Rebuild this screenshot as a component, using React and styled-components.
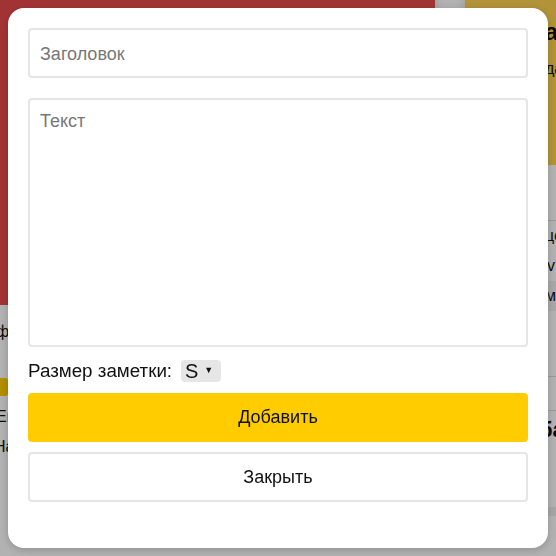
import React, { useState } from 'react';
import styled, { createGlobalStyle } from 'styled-components';

const GlobalStyle = createGlobalStyle`
  * { box-sizing: border-box; }
  html, body {
    margin: 0;
    padding: 0;
    width: 556px;
    height: 556px;
    overflow: hidden;
    font-family: "Liberation Sans", Arial, sans-serif;
    background: #ffffff;
  }
`;

// Page behind the modal
const Board = styled.div`
  display: flex;
  gap: 30px;
  width: 556px;
  height: 556px;
  overflow: hidden;
  margin-top: -40px;
`;

const NoteCard = styled.div`
  flex: 0 0 ${(p) => p.width}px;
  margin-left: ${(p) => p.offset || 0}px;
  display: flex;
  flex-direction: column;
  border-radius: 16px;
  overflow: hidden;
  background: #ffffff;
  box-shadow: 0 4px 10px rgba(0, 0, 0, 0.15);
  height: 630px;
`;

const NoteHead = styled.div`
  background: ${(p) => p.color};
  height: ${(p) => p.height}px;
  padding: 58px 0 0 ${(p) => p.indent || 20}px;
  font-size: 24px;
  font-weight: bold;
  color: #111;
  white-space: nowrap;
`;

const NoteSub = styled.div`
  margin-top: 14px;
  font-size: 16px;
  font-weight: normal;
`;

const NoteRow = styled.div`
  padding: 6px 0 6px ${(p) => p.indent || 0}px;
  font-size: ${(p) => p.size || 16}px;
  color: #111;
  font-weight: ${(p) => (p.bold ? 'bold' : 'normal')};
  background: ${(p) => p.shade || 'transparent'};
  border-bottom: ${(p) => (p.line ? '1px solid #ddd' : 'none')};
  min-height: ${(p) => p.h || 24}px;
  white-space: nowrap;
`;

const Chevron = styled.span`
  display: inline-block;
  width: 22px;
  height: 18px;
  background: #ffcc00;
  border-radius: 3px;
  text-align: center;
  font-size: 12px;
  line-height: 18px;
`;

const Overlay = styled.div`
  position: fixed;
  inset: 0;
  background: rgba(0, 0, 0, 0.3);
  display: flex;
  align-items: flex-start;
  justify-content: center;
  padding-top: 8px;
`;

const Modal = styled.form`
  width: 540px;
  height: 540px;
  background: #ffffff;
  border-radius: 16px;
  box-shadow: 0 2px 8px rgba(0, 0, 0, 0.2);
  padding: 20px 20px 46px 20px;
  display: flex;
  flex-direction: column;
`;

const TitleInput = styled.input`
  width: 100%;
  height: 50px;
  border: 2px solid #e6e6e6;
  border-radius: 4px;
  padding: 4px 10px 0 10px;
  font-family: inherit;
  font-size: 18px;
  color: #222;
  outline: none;
  &::placeholder { color: #777; }
`;

const TextArea = styled.textarea`
  width: 100%;
  height: 250px;
  margin-top: 20px;
  border: 2px solid #e6e6e6;
  border-radius: 4px;
  padding: 11px 10px;
  font-family: inherit;
  font-size: 18px;
  color: #222;
  resize: none;
  outline: none;
  &::placeholder { color: #777; }
`;

const SizeRow = styled.label`
  display: flex;
  align-items: center;
  gap: 9px;
  margin-top: 13px;
  font-size: 18.8px;
  color: #111;
`;

const SelectWrap = styled.span`
  position: relative;
  display: inline-block;
`;

const SizeSelect = styled.select`
  appearance: none;
  -webkit-appearance: none;
  width: 40px;
  height: 22px;
  border: none;
  border-radius: 4px;
  background: #e6e6e6;
  padding: 0 0 0 4px;
  font-family: inherit;
  font-size: 20px;
  color: #111;
  outline: none;
`;

const Arrow = styled.span`
  position: absolute;
  right: 8px;
  top: 5px;
  font-size: 9px;
  color: #111;
  pointer-events: none;
`;

const Button = styled.button`
  width: 100%;
  height: 50px;
  margin-top: ${(p) => p.top}px;
  border-radius: 4px;
  border: ${(p) => (p.primary ? 'none' : '2px solid #e6e6e6')};
  background: ${(p) => (p.primary ? '#ffcc00' : '#ffffff')};
  font-family: inherit;
  font-size: 18px;
  color: #111;
  cursor: pointer;
`;

const App = () => {
  const [size, setSize] = useState('S');

  return (
    <>
      <GlobalStyle />
      <Board>
        <NoteCard width={455} offset={-20}>
          <NoteHead color="#e94a4c" height={345} />
          <NoteRow h={8} />
          <NoteRow indent={16} h={30}>фото</NoteRow>
          <NoteRow h={24} />
          <NoteRow indent={6} h={30}>
            <Chevron>⌄</Chevron>
          </NoteRow>
          <NoteRow indent={16} h={30}>Ещё</NoteRow>
          <NoteRow indent={14} h={30}>На неделю</NoteRow>
        </NoteCard>
        <NoteCard width={300}>
          <NoteHead color="#ffd350" height={205} indent={10}>
            Работа
            <NoteSub>Новые задачи</NoteSub>
          </NoteHead>
          <NoteRow line h={56} />
          <NoteRow indent={80} h={24}>цели</NoteRow>
          <NoteRow indent={82} h={30}>v</NoteRow>
          <NoteRow indent={80} shade="#f1f1f1" h={26}>м</NoteRow>
          <NoteRow line h={66} />
          <NoteRow line h={34} />
          <NoteRow indent={74} bold size={22} h={96}>ба</NoteRow>
          <NoteRow indent={80} shade="#eeeeee" size={20} h={40}>s</NoteRow>
        </NoteCard>
      </Board>
      <Overlay>
        <Modal onSubmit={(e) => e.preventDefault()}>
          <TitleInput placeholder="Заголовок" />
          <TextArea placeholder="Текст" />
          <SizeRow>
            Размер заметки:
            <SelectWrap>
              <SizeSelect value={size} onChange={(e) => setSize(e.target.value)}>
                <option value="S">S</option>
                <option value="M">M</option>
                <option value="L">L</option>
              </SizeSelect>
              <Arrow>▼</Arrow>
            </SelectWrap>
          </SizeRow>
          <Button primary top={10}>Добавить</Button>
          <Button type="button" top={10}>Закрыть</Button>
        </Modal>
      </Overlay>
    </>
  );
};

export default App;
